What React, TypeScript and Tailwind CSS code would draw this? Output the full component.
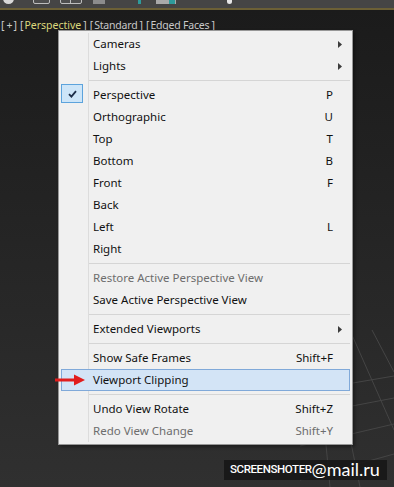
import React from "react"

type Item =
  | { kind: "sep" }
  | {
      kind: "item"
      label: string
      shortcut?: string
      submenu?: boolean
      checked?: boolean
      disabled?: boolean
      hover?: boolean
    }

const items: Item[] = [
  { kind: "item", label: "Cameras", submenu: true },
  { kind: "item", label: "Lights", submenu: true },
  { kind: "sep" },
  { kind: "item", label: "Perspective", shortcut: "P", checked: true },
  { kind: "item", label: "Orthographic", shortcut: "U" },
  { kind: "item", label: "Top", shortcut: "T" },
  { kind: "item", label: "Bottom", shortcut: "B" },
  { kind: "item", label: "Front", shortcut: "F" },
  { kind: "item", label: "Back" },
  { kind: "item", label: "Left", shortcut: "L" },
  { kind: "item", label: "Right" },
  { kind: "sep" },
  { kind: "item", label: "Restore Active Perspective View", disabled: true },
  { kind: "item", label: "Save Active Perspective View" },
  { kind: "sep" },
  { kind: "item", label: "Extended Viewports", submenu: true },
  { kind: "sep" },
  { kind: "item", label: "Show Safe Frames", shortcut: "Shift+F" },
  { kind: "item", label: "Viewport Clipping", hover: true },
  { kind: "sep" },
  { kind: "item", label: "Undo View Rotate", shortcut: "Shift+Z" },
  { kind: "item", label: "Redo View Change", shortcut: "Shift+Y", disabled: true },
]

function SubArrow() {
  return (
    <svg width="4" height="7" viewBox="0 0 4 7" className="block">
      <polygon points="0,0 4,3.5 0,7" fill="#3c3c3c" />
    </svg>
  )
}

function MenuRow({ item }: { item: Item }) {
  if (item.kind === "sep") {
    return (
      <div className="flex h-[7px]">
        <div className="w-[28px] shrink-0 border-r border-[#dcdcdc]" />
        <div className="flex-1 pt-[3px]">
          <div className="h-px bg-[#d5d5d5]" />
        </div>
      </div>
    )
  }

  return (
    <div
      className={`flex h-[22px] items-center ${
        item.hover ? "bg-[#d3e4f6] shadow-[inset_0_0_0_1px_#80a9d9]" : ""
      } ${item.disabled ? "text-[#6d6d6d]" : "text-[#111]"}`}
    >
      <div
        className={`flex h-full w-[28px] shrink-0 items-start border-r ${
          item.hover ? "border-transparent" : "border-[#dcdcdc]"
        }`}
      >
        {item.checked && (
          <div className="flex h-[19px] w-[22px] items-center justify-center border border-[#5ca3dc] bg-[#cde5f8]">
            <svg width="9" height="8" viewBox="0 0 9 8">
              <path d="M1 4.2 L3.4 6.6 L8 1.2" fill="none" stroke="#1d2f4a" strokeWidth="1.8" />
            </svg>
          </div>
        )}
      </div>
      <div className="flex-1 pl-[4px] leading-[22px]">{item.label}</div>
      <div className="leading-[22px]">{item.shortcut}</div>
      <div className="flex w-[17px] shrink-0 pl-[5px]">{item.submenu && <SubArrow />}</div>
    </div>
  )
}

function ViewportGrid() {
  const lines = [
    "M300 392 L394 376",
    "M300 416 L394 398",
    "M300 446 L394 424",
    "M300 480 L394 454",
    "M330 340 L360 487",
    "M352 335 L394 430",
    "M372 330 L394 372",
    "M318 360 L330 487",
  ]
  return (
    <svg className="absolute inset-0" width="394" height="477" viewBox="0 10 394 477">
      {lines.map((d, i) => (
        <path key={i} d={d} stroke="#454545" strokeWidth="1" fill="none" />
      ))}
    </svg>
  )
}

export default function App() {
  return (
    <div className="flex h-[487px] w-[394px] flex-col overflow-hidden bg-[#1c1c1c] font-['Noto_Sans',sans-serif] text-[11.5px]">
      {/* toolbar, only the bottom of its icons is visible */}
      <div className="relative h-[8px] shrink-0 overflow-hidden bg-[#454545]">
        <div className="flex items-end">
          <div className="ml-[3px] -mt-[8px] h-[11px] w-[11px] rounded-full bg-[#d8d8d8]" />
          <div className="ml-[19px] -mt-[8px] h-[11px] w-[17px] rounded-[2px] border border-[#bdbdbd] bg-[#4e4e4e]" />
          <div className="ml-[10px] -mt-[8px] flex h-[11px] w-[22px] rounded-[2px] border border-[#bdbdbd] bg-[#4e4e4e]">
            <div className="ml-[9px] w-px bg-[#bdbdbd]" />
          </div>
          <div className="ml-[11px] -mt-[8px] h-[10px] w-[12px] bg-[#8c8c8c]" />
          <div className="ml-[33px] -mt-[8px] h-[10px] w-[3px] bg-[#2e9b9b]" />
          <div className="ml-[15px] -mt-[8px] flex h-[10px] w-[20px] bg-[#a9a9a9]">
            <div className="ml-[13px] h-full w-[6px] bg-[#2e9b9b]" />
          </div>
          <div className="ml-[51px] -mt-[8px] h-[12px] w-[5px] rounded-b-full bg-[#e6e6e6]" />
        </div>
      </div>
      <div className="h-[2px] shrink-0 bg-[#6c6036]" />

      {/* viewport */}
      <div className="relative flex-1 bg-linear-to-b from-[#1b1b1b] to-[#303030]">
        <ViewportGrid />

        <div className="relative flex pt-[8px] text-[10.5px] leading-[14px] text-[#c9c9c9]">
          <span className="ml-[1px]">[</span>
          <span className="ml-[2px]">+</span>
          <span className="ml-[1px]">]</span>
          <span className="ml-[3px]">[</span>
          <span className="ml-[1px] text-[#dcd97c]">Perspective</span>
          <span className="ml-[2px]">]</span>
          <span className="ml-[3px]">[</span>
          <span className="ml-[1px] tracking-[-0.2px]">Standard</span>
          <span className="ml-[2px]">]</span>
          <span className="ml-[3px]">[</span>
          <span className="ml-[1px] tracking-[-0.2px]">Edged Faces</span>
          <span className="ml-[2px]">]</span>
        </div>

        {/* context menu */}
        <div className="absolute left-[58px] top-[20px] w-[295px] border border-[#979797] bg-[#f0f0f0] p-[2px] shadow-[2px_2px_3px_rgba(0,0,0,0.35)]">
          {items.map((item, i) => (
            <MenuRow key={i} item={item} />
          ))}
        </div>

        {/* red arrow */}
        <svg className="absolute left-[54px] top-[364px]" width="32" height="12" viewBox="0 0 32 12">
          <path d="M1 6 L22 6" stroke="#e11d1d" strokeWidth="3" />
          <polygon points="20,0.5 31,6 20,11.5" fill="#e11d1d" />
        </svg>

        {/* watermark */}
        <div className="absolute left-[224px] top-[450px] flex h-[20px] w-[163px] items-center bg-[#171717]/90 pl-[6px] text-white">
          <span className="font-['Roboto',sans-serif] text-[11.5px] font-medium tracking-[-0.4px]">SCREENSHOTER</span>
          <span className="-mt-[3px] font-['Lato',sans-serif] text-[18px] leading-none">@mail.ru</span>
        </div>
      </div>
    </div>
  )
}
